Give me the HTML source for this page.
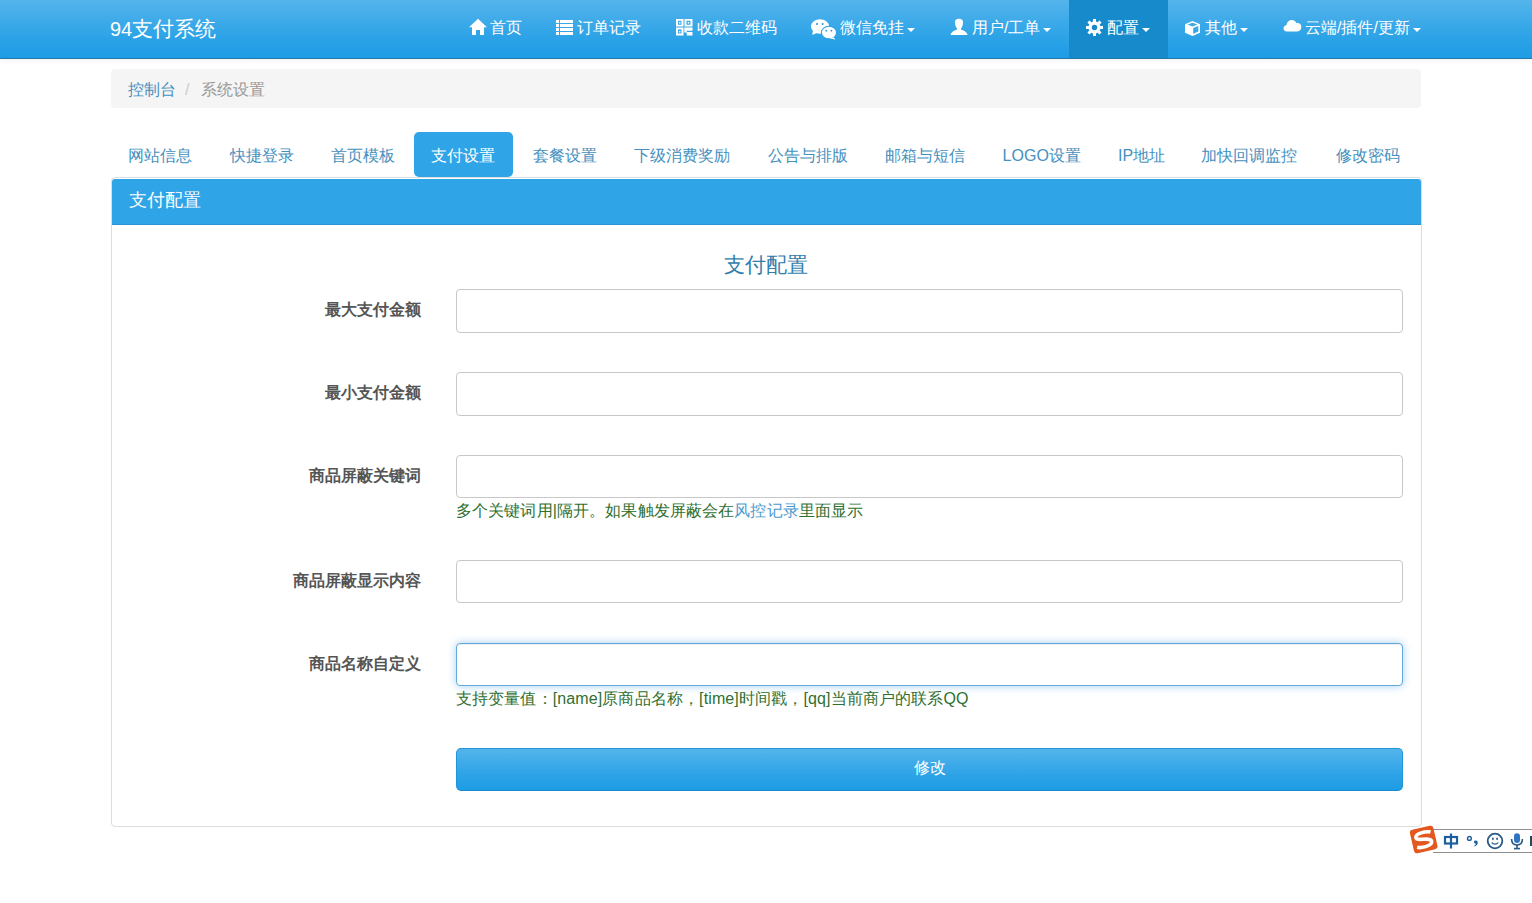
<!DOCTYPE html>
<html><head><meta charset="utf-8"><title>94支付系统</title>
<style>
*{box-sizing:border-box;margin:0;padding:0}
html,body{width:1532px;height:903px;overflow:hidden;background:#fff}
body{font-family:"Liberation Sans",sans-serif;font-size:16px;color:#555;position:relative}
.a{position:absolute;white-space:nowrap}
#nav{position:absolute;left:0;top:0;width:1532px;height:59px;box-shadow:0 2px 5px rgba(0,0,0,.05);z-index:2;background:linear-gradient(#54b4eb,#2fa4e7 60%,#1d9ce5);border-bottom:1px solid #2279a8}
#nav .t{position:absolute;color:#fff;font-size:16px;line-height:20px;top:18px;white-space:nowrap}
#nav svg{position:absolute}
.caret{position:absolute;width:0;height:0;border-top:4.6px solid #fff;border-left:4.4px solid transparent;border-right:4.4px solid transparent}
#act{position:absolute;left:1069px;top:0;width:99px;height:58px;background:#178acc}
#bc{position:absolute;left:111px;top:69px;width:1310px;height:39px;background:#f5f5f5;border-radius:4px}
.tab{position:absolute;top:132px;height:45px;line-height:47px;font-size:16px;color:#4590be;white-space:nowrap}
.tab.on{background:#2fa4e7;color:#fff;border-radius:5px}
#panel{position:absolute;left:111px;top:177px;width:1311px;height:650px;border:1px solid #ddd;border-radius:4px}
#ph{position:absolute;left:0;top:1px;width:1309px;height:46px;background:#2fa4e7;border-bottom:1px solid #2b95d3;border-radius:3px 3px 0 0}
.lbl{position:absolute;right:1111.5px;font-weight:bold;font-size:16px;color:#555;line-height:20px;white-space:nowrap}
.inp{position:absolute;left:456px;width:947px;height:44px;border:1px solid #c8c8c8;border-radius:4px;background:#fff}
.help{position:absolute;left:456px;font-size:16px;color:#2f7030;line-height:22px;letter-spacing:0.12px;white-space:nowrap}
</style></head><body>

<div id="nav">
  <div class="a" style="left:110px;top:17px;font-size:20px;line-height:24px;color:#fff">94<span style="font-size:21px">支付系统</span></div>
  <div id="act"></div>
  <!-- home -->
  <svg style="left:468px;top:18px" width="20" height="18" viewBox="0 0 20 18"><path d="M10 0.8 L19 9.2 L16 9.2 L16 17 L12 17 L12 12 L8 12 L8 17 L4 17 L4 9.2 L1 9.2 Z" fill="#fff"/></svg>
  <div class="t" style="left:490px">首页</div>
  <!-- list -->
  <svg style="left:556px;top:19px" width="18" height="17" viewBox="0 0 18 17"><g fill="#fff"><rect x="0" y="1" width="3" height="3"/><rect x="4" y="1" width="13" height="3"/><rect x="0" y="5" width="3" height="3"/><rect x="4" y="5" width="13" height="3"/><rect x="0" y="9" width="3" height="3"/><rect x="4" y="9" width="13" height="3"/><rect x="0" y="13" width="3" height="3"/><rect x="4" y="13" width="13" height="3"/></g></svg>
  <div class="t" style="left:577px">订单记录</div>
  <!-- qrcode -->
  <svg style="left:676px;top:19px" width="17" height="17" viewBox="0 0 17 17"><g fill="#fff" fill-rule="evenodd"><path d="M0 0h7.5v7.5h-7.5zM2 1.8v3.9h3.5v-3.9z"/><rect x="3" y="3" width="1.5" height="1.5"/><path d="M8.5 0h8v7.5h-8zM10.5 1.8v3.9h4v-3.9z"/><rect x="11.8" y="3" width="1.5" height="1.5"/><path d="M0 8.5h7.5v8h-7.5zM2 10.5v4h3.5v-4z"/><rect x="3" y="12" width="1.5" height="1.5"/><path d="M8.3 8.5h8.2v3.3h-5.8v1.2h5.8v3.5h-5.8v-3h-2.4z"/></g></svg>
  <div class="t" style="left:697px">收款二维码</div>
  <!-- wechat -->
  <svg style="left:810px;top:18px" width="28" height="22" viewBox="0 0 28 22"><g fill="#fff"><ellipse cx="10" cy="8.5" rx="9" ry="7.3"/><path d="M3 12.5 L2.2 17 L8 14.5 Z"/></g><g fill="#2a8fd0"><circle cx="7" cy="6" r="1"/><circle cx="12.6" cy="6" r="1"/></g><ellipse cx="19" cy="14.6" rx="7.6" ry="6.3" fill="#fff" stroke="#2ba0e3" stroke-width="1.1"/><path d="M23.5 19.2 L25.6 21.6 L19.8 20.4 Z" fill="#fff"/><g fill="#2a8fd0"><circle cx="16.3" cy="12.7" r="0.9"/><circle cx="21.4" cy="12.7" r="0.9"/></g></svg>
  <div class="t" style="left:840px">微信免挂</div>
  <div class="caret" style="left:907px;top:27.5px"></div>
  <!-- user -->
  <svg style="left:950px;top:18px" width="18" height="18" viewBox="0 0 18 18"><g fill="#fff"><path d="M5 4.5 C5 1.5 6.8 0.8 9 0.8 C11.2 0.8 13 1.5 13 4.5 C13 7.5 11.8 9.5 11 10.5 L11 11.5 C13.5 12.5 16.5 13.5 17.6 17 L0.6 17 C1.5 13.5 4.5 12.5 7 11.5 L7 10.5 C6.2 9.5 5 7.5 5 4.5 Z"/></g></svg>
  <div class="t" style="left:972px">用户/工单</div>
  <div class="caret" style="left:1043px;top:27.5px"></div>
  <!-- cog -->
  <svg style="left:1086px;top:18.5px" width="17" height="17" viewBox="0 0 17 17"><path fill="#fff" fill-rule="evenodd" d="M7 0h3v2.6l1.6 0.7 1.9-1.9 2.1 2.1-1.9 1.9 0.7 1.6h2.6v3h-2.6l-0.7 1.6 1.9 1.9-2.1 2.1-1.9-1.9-1.6 0.7v2.6h-3v-2.6l-1.6-0.7-1.9 1.9-2.1-2.1 1.9-1.9-0.7-1.6h-2.6v-3h2.6l0.7-1.6-1.9-1.9 2.1-2.1 1.9 1.9 1.6-0.7z M8.5 5.7a2.8 2.8 0 1 0 0.01 0z"/></svg>
  <div class="t" style="left:1107px">配置</div>
  <div class="caret" style="left:1142px;top:27.5px"></div>
  <!-- cube -->
  <svg style="left:1184px;top:20px" width="17" height="17" viewBox="0 0 17 17"><path fill="#fff" fill-rule="evenodd" d="M8.5 1 L16 4.2 L16 12.8 L8.5 16 L1 12.8 L1 4.2 Z M3.6 4.6 L8.5 6.6 L13.4 4.6 L8.5 2.7 Z M9.2 8 L9.2 13.8 L14.3 11.6 L14.3 5.9 Z"/></svg>
  <div class="t" style="left:1205px">其他</div>
  <div class="caret" style="left:1240px;top:27.5px"></div>
  <!-- cloud -->
  <svg style="left:1283px;top:19px" width="19" height="13" viewBox="0 0 19 13"><path fill="#fff" d="M4 12.5 C1.5 12.5 0.5 11 0.5 9.3 C0.5 7.5 1.8 6.3 3.5 6.2 C3.8 3.5 5.8 1 8.8 1 C11.2 1 12.8 2.3 13.5 4.2 C14 4 14.5 3.9 15 3.9 C17.2 4.2 18.3 5.8 18.3 8 C18.3 10.8 16.5 12.5 14 12.5 Z"/></svg>
  <div class="t" style="left:1305px">云端/插件/更新</div>
  <div class="caret" style="left:1413px;top:27.5px"></div>
</div>

<div id="bc">
  <div class="a" style="left:17px;top:11px;line-height:20px;color:#4590be">控制台</div>
  <div class="a" style="left:74px;top:11px;line-height:20px;color:#ccc">/</div>
  <div class="a" style="left:90px;top:11px;line-height:20px;color:#999">系统设置</div>
</div>

<div class="tab" style="left:110.5px;padding:0 17.3px">网站信息</div>
<div class="tab" style="left:212.3px;padding:0 17.3px">快捷登录</div>
<div class="tab" style="left:314px;padding:0 17.3px">首页模板</div>
<div class="tab on" style="left:414.2px;width:98.7px;padding:0 17.3px">支付设置</div>
<div class="tab" style="left:515.3px;padding:0 17.3px">套餐设置</div>
<div class="tab" style="left:616.9px;padding:0 17.3px">下级消费奖励</div>
<div class="tab" style="left:750.6px;padding:0 17.3px">公告与排版</div>
<div class="tab" style="left:867.9px;padding:0 17.3px">邮箱与短信</div>
<div class="tab" style="left:985.3px;padding:0 17.3px">LOGO设置</div>
<div class="tab" style="left:1100.7px;padding:0 17.3px">IP地址</div>
<div class="tab" style="left:1184.2px;padding:0 17.3px">加快回调监控</div>
<div class="tab" style="left:1318.5px;padding:0 17.3px">修改密码</div>

<div id="panel">
  <div id="ph"><div class="a" style="left:17px;top:10px;font-size:18px;line-height:22px;color:#fff">支付配置</div></div>
</div>

<div class="a" style="left:724px;top:254px;font-size:21px;line-height:22px;color:#317eac">支付配置</div>

<div class="lbl" style="top:300px">最大支付金额</div>
<div class="inp" style="top:289px"></div>

<div class="lbl" style="top:383px">最小支付金额</div>
<div class="inp" style="top:372px"></div>

<div class="lbl" style="top:466px">商品屏蔽关键词</div>
<div class="inp" style="top:455px;height:43px"></div>
<div class="help" style="top:500px">多个关键词用|隔开。如果触发屏蔽会在<span style="color:#4a9ad0">风控记录</span>里面显示</div>

<div class="lbl" style="top:571px">商品屏蔽显示内容</div>
<div class="inp" style="top:560px;height:43px"></div>

<div class="lbl" style="top:654px">商品名称自定义</div>
<div class="inp" style="top:643px;height:43px;border-color:#62a9dc;box-shadow:inset 0 1px 1px rgba(0,0,0,.075),0 0 9px rgba(102,175,233,.6)"></div>
<div class="help" style="top:688px">支持变量值：[name]原商品名称，[time]时间戳，[qq]当前商户的联系QQ</div>

<div class="a" style="left:456px;top:748px;width:947px;height:43px;border-radius:5px;background:linear-gradient(#54b4eb,#2fa4e7 60%,#1d9ce5);border:1px solid #1f96d8;border-bottom-color:#178acc;color:#fff;text-align:center;line-height:38px;font-size:16px">修改</div>


<!-- sogou ime bar -->
<div class="a" style="left:1433px;top:829px;width:110px;height:24px;background:#fff;border-top:1px solid #8f8f8f;border-bottom:1px solid #8f8f8f"></div>
<svg class="a" style="left:1406px;top:822px" width="36" height="35" viewBox="0 0 36 35">
  <g transform="rotate(-13 17.7 17.5)">
    <rect x="5.7" y="5.5" width="24" height="24" rx="3" fill="#e2581f"/>
    <path d="M26 11.8 C22 9.6 10.5 9.6 10.5 14.2 C10.5 18 25 16.2 25 21 C25 25.6 13.5 25.6 9.6 23.6" fill="none" stroke="#fff" stroke-width="3.6"/>
  </g>
</svg>
<svg class="a" style="left:1443px;top:833px" width="16" height="16" viewBox="0 0 16 16"><g fill="none" stroke="#1c5fa0" stroke-width="2.2"><rect x="2" y="4" width="12" height="6.5"/><path d="M8 0.5 V15.5"/></g></svg>
<svg class="a" style="left:1465px;top:835px" width="15" height="13" viewBox="0 0 15 13"><circle cx="4.4" cy="3.4" r="1.9" fill="none" stroke="#1c5fa0" stroke-width="1.4"/><path d="M10 5.5 C11.5 5.2 12.8 6 12.8 7.5 C12.8 9.3 11.5 10.8 9.6 11.5 L9.3 10.8 C10.2 10.3 10.8 9.6 10.9 8.8 C9.9 8.8 9 8.1 9 7.1 C9 6.3 9.4 5.7 10 5.5 Z" fill="#1c5fa0"/></svg>
<svg class="a" style="left:1485px;top:831px" width="20" height="20" viewBox="0 0 20 20"><circle cx="10" cy="10" r="7.3" fill="none" stroke="#285a88" stroke-width="1.8"/><ellipse cx="7.9" cy="7.8" rx="0.9" ry="1.4" fill="#285a88"/><ellipse cx="12.1" cy="7.8" rx="0.9" ry="1.4" fill="#285a88"/><path d="M6.8 11.5 C8 13.6 12 13.6 13.2 11.5" fill="none" stroke="#285a88" stroke-width="1.4"/></svg>
<svg class="a" style="left:1509px;top:832px" width="16" height="19" viewBox="0 0 16 19"><rect x="5" y="1.2" width="6" height="9.8" rx="3" fill="#2f74c0"/><path d="M2.6 7 C2.6 11 4.8 13 8 13 C11.2 13 13.4 11 13.4 7" fill="none" stroke="#285a88" stroke-width="1.6"/><path d="M8 13 V16.3" stroke="#285a88" stroke-width="1.6"/><rect x="5" y="15.8" width="6" height="1.6" fill="#285a88"/></svg>
<div class="a" style="left:1530px;top:836px;width:2px;height:10px;background:#1f4d5a"></div>
</body></html>
